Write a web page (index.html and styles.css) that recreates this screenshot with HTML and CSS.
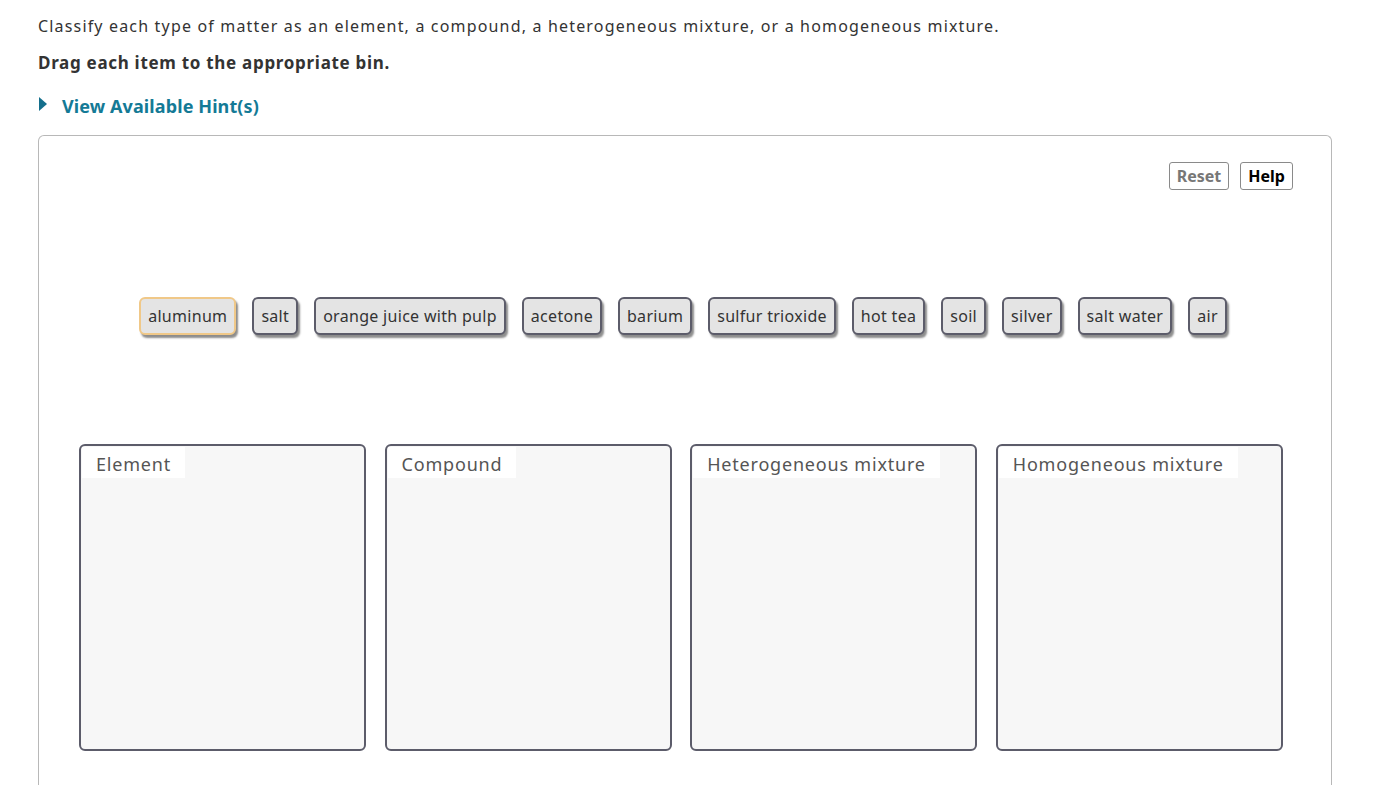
FILE: index.html
```html
<!DOCTYPE html>
<html lang="en">
<head>
    <meta charset="UTF-8">
    <meta name="viewport" content="width=device-width, initial-scale=1.0">
    <title>Classify Matter</title>

    <link rel="stylesheet" href="styles.css">
</head>
<body>

    <div class="page">
        <p class="intro">Classify each type of matter as an element, a compound, a heterogeneous mixture, or a homogeneous mixture.</p>
        <p class="task">Drag each item to the appropriate bin.</p>

        <div class="hint">
            <span class="arrow"></span>
            <a href="#">View Available Hint(s)</a>
        </div>

        <div class="panel">
            <div class="tools">
                <button class="reset">Reset</button>
                <button class="help">Help</button>
            </div>

            <div class="items">
                <div class="item active">aluminum</div>
                <div class="item">salt</div>
                <div class="item">orange juice with pulp</div>
                <div class="item">acetone</div>
                <div class="item">barium</div>
                <div class="item">sulfur trioxide</div>
                <div class="item">hot tea</div>
                <div class="item">soil</div>
                <div class="item">silver</div>
                <div class="item">salt water</div>
                <div class="item">air</div>
            </div>

            <div class="bins">
                <div class="bin"><span class="label">Element</span></div>
                <div class="bin"><span class="label">Compound</span></div>
                <div class="bin"><span class="label">Heterogeneous mixture</span></div>
                <div class="bin"><span class="label">Homogeneous mixture</span></div>
            </div>
        </div>
    </div>

</body>
</html>
```

FILE: styles.css
```css
body {
    margin: 0;
    background-color: white;
    font-family: "Noto Sans", "Noto Sans CJK KR", sans-serif;
    color: #333;
}

.page {
    padding: 1px 57px 0 38px;
}

.intro {
    margin: 0;
    padding-top: 13px;
    font-size: 16px;
    line-height: 24px;
    letter-spacing: 1.17px;
}

.task {
    margin: 12px 0 0;
    font-size: 17px;
    font-weight: bold;
    line-height: 26px;
    letter-spacing: 0.7px;
}

.hint {
    display: flex;
    align-items: center;
    margin-top: 17px;
    height: 26px;
}

.arrow {
    width: 0;
    height: 0;
    border-top: 7px solid transparent;
    border-bottom: 7px solid transparent;
    border-left: 8px solid #146f8c;
    margin: 0 15px 4px 1px;
}

.hint a {
    color: #147a96;
    font-weight: bold;
    font-size: 18px;
    letter-spacing: 0.1px;
    text-decoration: none;
}

.panel {
    margin-top: 16px;
    border: 1px solid #b8b8b8;
    border-bottom: none;
    border-radius: 6px 6px 0 0;
    height: 660px;
    padding: 26px 38px 0 40px;
}

.tools {
    display: flex;
    justify-content: flex-end;
    gap: 11px;
}

.tools button {
    font-family: inherit;
    font-size: 16px;
    font-weight: bold;
    background: white;
    border: 1px solid #8a8a8a;
    border-radius: 3px;
    height: 28px;
    padding: 0 7px;
}

.reset {
    color: #777;
}

.help {
    color: black;
}

.items {
    display: flex;
    justify-content: center;
    gap: 16px;
    margin-top: 107px;
    padding-right: 6px;
}

.item {
    height: 34px;
    line-height: 34px;
    padding: 0 7px;
    border: 2px solid #5c5c6a;
    border-radius: 6px;
    background-color: #e4e4e4;
    box-shadow: 2px 3px 2px rgba(0, 0, 0, 0.45);
    font-size: 16px;
    letter-spacing: 0.3px;
    color: #333;
}

.item.active {
    border-color: #f0c888;
}

.bins {
    display: flex;
    gap: 18.6px;
    margin-top: 109px;
}

.bin {
    box-sizing: border-box;
    width: 287px;
    height: 307px;
    border: 2px solid #5c5c6a;
    border-radius: 6px;
    background-color: #f7f7f7;
    padding: 1px;
}

.label {
    display: inline-block;
    background-color: white;
    height: 31px;
    line-height: 28px;
    padding: 3px 14px 0;
    box-sizing: border-box;
    font-size: 18px;
    letter-spacing: 0.8px;
    color: #555;
}
```
